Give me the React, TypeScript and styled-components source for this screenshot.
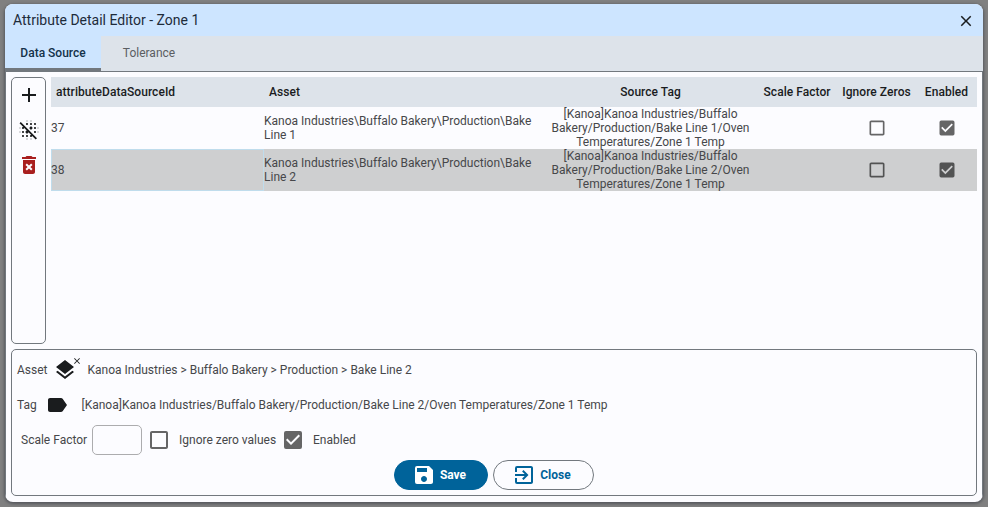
import React from "react";
import styled, { createGlobalStyle } from "styled-components";
import {
  MdAdd,
  MdBlurOff,
  MdCheckBox,
  MdCheckBoxOutlineBlank,
  MdClose,
  MdDeleteForever,
  MdExitToApp,
  MdLabel,
  MdLayers,
  MdSave,
} from "react-icons/md";

const GlobalStyle = createGlobalStyle`
  *, *::before, *::after { box-sizing: border-box; }
  body {
    margin: 0;
    background: #808080;
    color: #46474a;
    font: 400 12px/14px Roboto, sans-serif;
    overflow: hidden;
  }
  svg { display: block; flex: none; }
`;

const Backdrop = styled.div`
  height: 507px;
  padding: 4px 5px 5px;
`;

const Dialog = styled.section`
  display: flex;
  flex-direction: column;
  height: 498px;
  border-radius: 8px;
  overflow: hidden;
  background: #fcfcff;
  box-shadow: 0 1px 3px 1px rgba(60, 64, 72, 0.6);
`;

const TitleBar = styled.header`
  display: flex;
  align-items: center;
  justify-content: space-between;
  height: 32px;
  flex: none;
  padding: 0 8px;
  background: #cde5ff;
  color: #1d2b3a;
  font-size: 14px;
`;

const CloseIcon = styled.button`
  display: flex;
  margin-top: 2px;
  padding: 0;
  border: 0;
  background: none;
  color: #1a1c1e;
`;

const Tabs = styled.nav`
  display: flex;
  height: 36px;
  flex: none;
  background: #dde3ea;
  border-bottom: 1px solid #72787e;
`;

const Tab = styled.button<{ $active?: boolean }>`
  width: 96px;
  height: ${(p) => (p.$active ? 36 : 35)}px;
  padding: ${(p) => (p.$active ? "1px 0 0" : "0 0 2px")};
  border: 0;
  border-bottom: ${(p) => (p.$active ? "4px solid #72787e" : "0")};
  background: ${(p) => (p.$active ? "#cde5ff" : "transparent")};
  color: ${(p) => (p.$active ? "#14324a" : "#5b5e62")};
  font: ${(p) => (p.$active ? 500 : 400)} 12px/14px Roboto, sans-serif;
`;

const Body = styled.main`
  display: flex;
  flex-direction: column;
  gap: 5px;
  flex: 1;
  min-height: 0;
  padding: 5px 5px 6px;
  border: solid #72787e;
  border-width: 0 1px;
`;

const Upper = styled.div`
  display: flex;
  gap: 5px;
  height: 267px;
`;

const Toolbar = styled.div`
  display: flex;
  flex-direction: column;
  align-items: center;
  gap: 11px;
  width: 35px;
  padding-top: 5px;
  border: 1px solid #72787e;
  border-radius: 5px;
  color: #1a1c1e;
`;

const columns = "213px 275px 223px 75px 79px 61px";

const Table = styled.div`
  flex: 1;
`;

const HeaderRow = styled.div`
  display: grid;
  grid-template-columns: ${columns};
  align-items: center;
  height: 30px;
  background: #dde3ea;
  color: #1a1c1e;
  font-weight: 500;
  letter-spacing: 0.05px;
`;

const HeaderCell = styled.div<{ $center?: boolean; $inset?: number }>`
  padding-left: ${(p) => (p.$center ? 0 : p.$inset ?? 5)}px;
  text-align: ${(p) => (p.$center ? "center" : "left")};
  white-space: nowrap;
`;

const Row = styled.div<{ $selected?: boolean }>`
  display: grid;
  grid-template-columns: ${columns};
  height: 42px;
  background: ${(p) => (p.$selected ? "#cecfd0" : "#fcfcff")};
`;

const Cell = styled.div<{ $center?: boolean; $focused?: boolean }>`
  display: flex;
  align-items: center;
  justify-content: ${(p) => (p.$center ? "center" : "flex-start")};
  text-align: ${(p) => (p.$center ? "center" : "left")};
  box-shadow: ${(p) => (p.$focused ? "inset 0 0 0 1px #bfdcec" : "none")};
`;

const SourceText = styled.span`
  width: 206px;
`;

const CheckIcon = styled.span<{ $raised?: boolean }>`
  display: flex;
  margin-bottom: ${(p) => (p.$raised ? 1 : 0)}px;
  color: rgba(0, 0, 0, 0.6);
`;

const Detail = styled.section`
  display: flex;
  flex-direction: column;
  height: 147px;
  padding: 2px 5px 0;
  border: 1px solid #72787e;
  border-radius: 5px;
`;

const Line = styled.div`
  display: flex;
  align-items: center;
  height: 35px;
`;

const Label = styled.span<{ $width: number; $inset?: number }>`
  width: ${(p) => p.$width}px;
  padding-left: ${(p) => p.$inset ?? 0}px;
  flex: none;
  white-space: nowrap;
`;

const AssetIcon = styled.span`
  position: relative;
  margin-right: 10.5px;
  color: #1a1c1e;
`;

const ClearMark = styled.span`
  position: absolute;
  top: -2px;
  right: -5px;
`;

const TagIcon = styled.span`
  margin-right: 12.5px;
  color: #1a1c1e;
`;

const ScaleInput = styled.input`
  width: 50px;
  height: 30px;
  margin-right: 5px;
  border: 1px solid #acacae;
  border-radius: 5px;
  background: transparent;
`;

const Actions = styled.div`
  display: flex;
  justify-content: center;
  gap: 5px;
  padding-top: 3px;
`;

const Button = styled.button<{ $primary?: boolean }>`
  display: flex;
  align-items: center;
  justify-content: center;
  gap: 4px;
  width: ${(p) => (p.$primary ? 94 : 101)}px;
  height: 30px;
  padding: 0 4px 0 0;
  border: 1px solid ${(p) => (p.$primary ? "#00639a" : "#72787e")};
  border-radius: 15px;
  background: ${(p) => (p.$primary ? "#00639a" : "#fcfcff")};
  color: ${(p) => (p.$primary ? "#fff" : "#00639a")};
  font: 700 12px/14px Roboto, sans-serif;
`;

const rows = [
  { id: 37, line: 1, selected: false },
  { id: 38, line: 2, selected: true },
];

const Check = ({ checked, size }: { checked?: boolean; size: number }) => (
  <CheckIcon $raised={size < 24}>
    {checked ? <MdCheckBox size={size} /> : <MdCheckBoxOutlineBlank size={size} />}
  </CheckIcon>
);

export default function App() {
  return (
    <>
      <GlobalStyle />
      <Backdrop>
        <Dialog>
          <TitleBar>
            <span>Attribute Detail Editor - Zone 1</span>
            <CloseIcon aria-label="Close dialog">
              <MdClose size={18} />
            </CloseIcon>
          </TitleBar>
          <Tabs>
            <Tab $active>Data Source</Tab>
            <Tab>Tolerance</Tab>
          </Tabs>
          <Body>
            <Upper>
              <Toolbar>
                <MdAdd size={24} />
                <MdBlurOff size={24} />
                <MdDeleteForever size={24} color="#a91f1f" />
              </Toolbar>
              <Table>
                <HeaderRow>
                  <HeaderCell>attributeDataSourceId</HeaderCell>
                  <HeaderCell>Asset</HeaderCell>
                  <HeaderCell $center>Source Tag</HeaderCell>
                  <HeaderCell $inset={1.5}>Scale Factor</HeaderCell>
                  <HeaderCell $center>Ignore Zeros</HeaderCell>
                  <HeaderCell $center>Enabled</HeaderCell>
                </HeaderRow>
                {rows.map((row) => (
                  <Row key={row.id} $selected={row.selected}>
                    <Cell $focused={row.selected}>{row.id}</Cell>
                    <Cell>{`Kanoa Industries\\Buffalo Bakery\\Production\\Bake Line ${row.line}`}</Cell>
                    <Cell $center>
                      <SourceText>
                        {`[Kanoa]Kanoa Industries/Buffalo Bakery/Production/Bake Line ${row.line}/Oven Temperatures/Zone 1 Temp`}
                      </SourceText>
                    </Cell>
                    <Cell />
                    <Cell $center>
                      <Check size={20} />
                    </Cell>
                    <Cell $center>
                      <Check size={20} checked />
                    </Cell>
                  </Row>
                ))}
              </Table>
            </Upper>
            <Detail>
              <Line>
                <Label $width={36}>Asset</Label>
                <AssetIcon>
                  <MdLayers size={24} />
                  <ClearMark>
                    <MdClose size={10} />
                  </ClearMark>
                </AssetIcon>
                <span>Kanoa Industries &gt; Buffalo Bakery &gt; Production &gt; Bake Line 2</span>
              </Line>
              <Line>
                <Label $width={28}>Tag</Label>
                <TagIcon>
                  <MdLabel size={24} />
                </TagIcon>
                <span>
                  [Kanoa]Kanoa Industries/Buffalo Bakery/Production/Bake Line 2/Oven Temperatures/Zone 1
                  Temp
                </span>
              </Line>
              <Line>
                <Label $width={75} $inset={4}>Scale Factor</Label>
                <ScaleInput aria-label="Scale Factor" />
                <Check size={24} />
                <Label $width={110} $inset={8}>Ignore zero values</Label>
                <Check size={24} checked />
                <Label $width={60} $inset={8}>Enabled</Label>
              </Line>
              <Actions>
                <Button $primary>
                  <MdSave size={24} />
                  Save
                </Button>
                <Button>
                  <MdExitToApp size={24} />
                  Close
                </Button>
              </Actions>
            </Detail>
          </Body>
        </Dialog>
      </Backdrop>
    </>
  );
}
